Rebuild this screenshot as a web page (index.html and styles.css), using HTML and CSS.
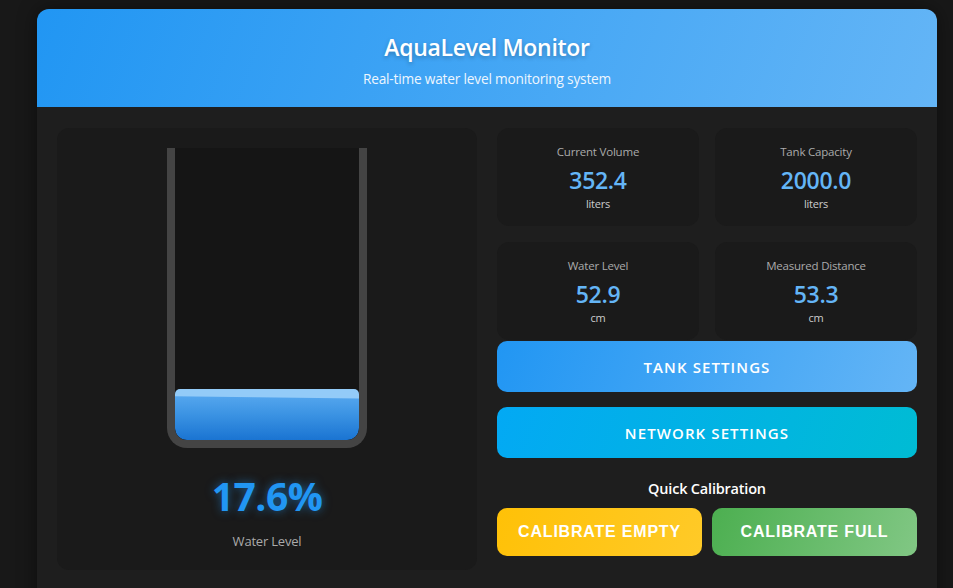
FILE: index.html
```html
<!DOCTYPE html>
<html>
<head>
<meta charset="utf-8">
<link rel="stylesheet" href="styles.css">
</head>
<body>
<div class="container">
  <header class="header">
    <h1 class="title">AquaLevel Monitor</h1>
    <p class="subtitle">Real-time water level monitoring system</p>
  </header>
  <main class="content">
    <section class="tank-panel">
      <div class="tank">
        <div class="water" style="height: 17.6%"></div>
      </div>
      <div class="percent">17.6%</div>
      <div class="percent-label">Water Level</div>
    </section>
    <section class="side">
      <div class="stats">
        <div class="stat">
          <div class="stat-label">Current Volume</div>
          <div class="stat-value">352.4</div>
          <div class="stat-unit">liters</div>
        </div>
        <div class="stat">
          <div class="stat-label">Tank Capacity</div>
          <div class="stat-value">2000.0</div>
          <div class="stat-unit">liters</div>
        </div>
        <div class="stat">
          <div class="stat-label">Water Level</div>
          <div class="stat-value">52.9</div>
          <div class="stat-unit">cm</div>
        </div>
        <div class="stat">
          <div class="stat-label">Measured Distance</div>
          <div class="stat-value">53.3</div>
          <div class="stat-unit">cm</div>
        </div>
      </div>
      <button class="btn btn-tank">TANK SETTINGS</button>
      <button class="btn btn-network">NETWORK SETTINGS</button>
      <div class="calib-title">Quick Calibration</div>
      <div class="calib-row">
        <button class="cbtn cbtn-empty">CALIBRATE EMPTY</button>
        <button class="cbtn cbtn-full">CALIBRATE FULL</button>
      </div>
    </section>
  </main>
</div>
</body>
</html>
```

FILE: styles.css
```css
* { box-sizing: border-box; }
html, body { margin: 0; padding: 0; }
body {
  background: #181818;
  font-family: "Open Sans", "Noto Sans", sans-serif;
  color: #fff;
  padding: 9px 0 0 37px;
  overflow: hidden;
  height: 588px;
}
.container {
  width: 900px;
  background: #1e1e1e;
  border-radius: 12px 12px 0 0;
  box-shadow: 0 0 20px rgba(0,0,0,0.45);
  height: 620px;
}
.header {
  height: 98px;
  background: linear-gradient(110deg, #2196f3 0%, #64b5f6 100%);
  border-radius: 12px 12px 0 0;
  text-align: center;
  padding-top: 22px;
}
.title {
  margin: 0;
  font-size: 23px;
  font-weight: 600;
  line-height: 32px;
  letter-spacing: -0.3px;
  text-shadow: 0 2px 4px rgba(0,0,0,0.25);
}
.subtitle {
  margin: 7px 0 0;
  font-size: 13.7px;
  line-height: 18px;
  color: #eef6fe;
  letter-spacing: -0.2px;
}
.content {
  display: grid;
  grid-template-columns: 420px 420px;
  gap: 20px;
  padding: 21px 20px 20px;
  align-items: start;
}
.tank-panel {
  background: #1a1a1a;
  border-radius: 12px;
  height: 442px;
  padding-top: 20px;
  display: flex;
  flex-direction: column;
  align-items: center;
}
.tank {
  width: 200px;
  height: 300px;
  border: 8px solid #444;
  border-top: none;
  border-radius: 0 0 20px 20px;
  background: #151515;
  display: flex;
  flex-direction: column;
  justify-content: flex-end;
  overflow: hidden;
}
.water {
  width: 100%;
  border-radius: 5px 5px 12px 12px;
  background:
    linear-gradient(180.7deg, #93cbf8 0, #93cbf8 9px, rgba(147,203,248,0) 10px),
    linear-gradient(to bottom, #5eadf2 0%, #3b93e3 50%, #1a74d2 100%);
}
.percent {
  margin-top: 25px;
  font-size: 39px;
  font-weight: 700;
  line-height: 46px;
  color: #2196f3;
  letter-spacing: -0.5px;
  text-shadow: 0 0 10px rgba(33,150,243,0.55);
}
.percent-label {
  margin-top: 13px;
  font-size: 13px;
  color: #aaa;
  letter-spacing: -0.2px;
}
.side {
  display: flex;
  flex-direction: column;
}
.stats {
  display: grid;
  grid-template-columns: 1fr 1fr;
  gap: 16px;
}
.stat {
  background: #1a1a1a;
  border-radius: 12px;
  height: 98px;
  text-align: center;
  padding-top: 15px;
}
.stat-label {
  font-size: 11.5px;
  line-height: 18px;
  color: #aaa;
  letter-spacing: -0.2px;
}
.stat-value {
  font-size: 23px;
  font-weight: 600;
  line-height: 30px;
  margin-top: 4px;
  color: #64b5f6;
  letter-spacing: -0.3px;
}
.stat-unit {
  font-size: 11px;
  line-height: 16px;
  margin-top: 1px;
  color: #ccc;
  letter-spacing: -0.2px;
}
.btn {
  display: block;
  width: 100%;
  border: none;
  border-radius: 10px;
  color: #fff;
  font-family: "Open Sans", "Noto Sans", sans-serif;
  font-size: 15px;
  font-weight: 600;
  letter-spacing: 1.1px;
  cursor: pointer;
}
.btn-tank {
  margin-top: 1px;
  height: 51px;
  background: linear-gradient(110deg, #2196f3 0%, #64b5f6 100%);
}
.btn-network {
  margin-top: 15px;
  height: 51px;
  background: linear-gradient(110deg, #03a9f4 0%, #00bcd4 100%);
}
.calib-title {
  margin-top: 21px;
  text-align: center;
  font-size: 14.5px;
  font-weight: 600;
  line-height: 20px;
  letter-spacing: -0.2px;
}
.calib-row {
  margin-top: 9px;
  display: grid;
  grid-template-columns: 1fr 1fr;
  gap: 10px;
}
.cbtn {
  height: 48px;
  border: none;
  border-radius: 10px;
  color: #fff;
  font-family: "Liberation Sans", Arial, sans-serif;
  font-size: 16px;
  font-weight: 700;
  letter-spacing: 0.8px;
  cursor: pointer;
}
.cbtn-empty {
  background: linear-gradient(110deg, #ffc107 0%, #ffca28 100%);
}
.cbtn-full {
  background: linear-gradient(110deg, #4caf50 0%, #81c784 100%);
}
```
